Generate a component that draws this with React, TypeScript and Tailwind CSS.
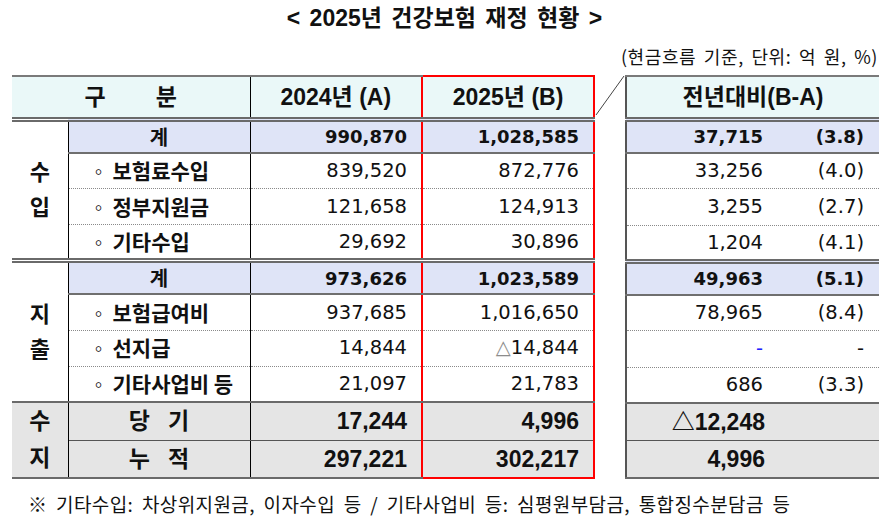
import React from 'react';

interface RowI {
  label: string;
  a: string;
  b: string;
  d: string;
  p: string;
}

const income: RowI[] = [
  { label: '보험료수입', a: '839,520', b: '872,776', d: '33,256', p: '(4.0)' },
  { label: '정부지원금', a: '121,658', b: '124,913', d: '3,255', p: '(2.7)' },
  { label: '기타수입', a: '29,692', b: '30,896', d: '1,204', p: '(4.1)' },
];

const expense: RowI[] = [
  { label: '보험급여비', a: '937,685', b: '1,016,650', d: '78,965', p: '(8.4)' },
  { label: '선지급', a: '14,844', b: '△14,844', d: '-', p: '-' },
  { label: '기타사업비 등', a: '21,097', b: '21,783', d: '686', p: '(3.3)' },
];

const head = "font-['Liberation_Sans','Noto_Sans_CJK_KR',sans-serif] font-bold";
const num = "font-['DejaVu_Sans','Noto_Sans_CJK_KR',sans-serif]";
const kr = "font-['Noto_Sans_CJK_KR',sans-serif]";

const red = 'border-l-2 border-r-2 border-l-[#ff0000] border-r-[#ff0000]';
const dotted = 'border-b border-b-[#8a8a8a] [border-bottom-style:dotted]';
const dbl = 'border-b-[5px] border-b-[#6a6a6a] [border-bottom-style:double]';
const solid = 'border-b-2 border-b-[#6a6a6a]';

function Section({
  title,
  total,
  rows,
  last,
}: {
  title: [string, string];
  total: { a: string; b: string };
  rows: RowI[];
  last: string;
}) {
  return (
    <>
      <tr className="h-[33px]">
        <td
          rowSpan={4}
          className={`border-r border-r-black bg-white text-center text-[22px] leading-[35px] ${head} ${last}`}
        >
          {title[0]}
          <br />
          {title[1]}
        </td>
        <td className={`border-r border-r-black border-b-2 border-b-[#6f6f6f] bg-[#dfe4f7] text-center text-[20px] ${kr} font-bold`}>
          계
        </td>
        <td className={`border-b-2 border-b-[#6f6f6f] bg-[#dfe4f7] pr-[14px] text-right text-[18px] font-bold ${num}`}>
          {total.a}
        </td>
        <td className={`${red} border-b-2 border-b-[#6f6f6f] bg-[#dfe4f7] pr-[14px] text-right text-[18px] font-bold ${num}`}>
          {total.b}
        </td>
      </tr>
      {rows.map((r, i) => {
        const line = i === rows.length - 1 ? last : dotted;
        return (
          <tr key={r.label} className="h-[36px]">
            <td className={`border-r border-r-black pl-[21px] text-[21px] font-bold ${kr} ${line}`}>
              <span className="mr-[5px] text-[18px]">◦</span>
              {r.label}
            </td>
            <td className={`pr-[14px] text-right text-[19.5px] ${num} ${line}`}>{r.a}</td>
            <td className={`${red} pr-[14px] text-right text-[19.5px] ${num} ${line}`}>
              {r.b.startsWith('△') ? (
                <>
                  <span className="text-[#8c8c8c]">△</span>
                  {r.b.slice(1)}
                </>
              ) : (
                r.b
              )}
            </td>
          </tr>
        );
      })}
    </>
  );
}

function RightSection({
  total,
  rows,
  last,
}: {
  total: { d: string; p: string };
  rows: RowI[];
  last: string;
}) {
  return (
    <>
      <tr className="h-[33px]">
        <td className={`border-b-2 border-b-[#6f6f6f] bg-[#dfe4f7] text-[18px] font-bold ${num}`}>
          <div className="flex justify-end pr-[15px]">
            <span>{total.d}</span>
            <span className="w-[101px] text-right">{total.p}</span>
          </div>
        </td>
      </tr>
      {rows.map((r, i) => {
        const line = i === rows.length - 1 ? last : dotted;
        return (
          <tr key={r.label} className="h-[36px]">
            <td className={`text-[19.5px] ${num} ${line}`}>
              <div className="flex justify-end pr-[15px]">
                {r.d === '-' ? (
                  <span className="text-[#2020ff]">-</span>
                ) : (
                  <span>{r.d}</span>
                )}
                <span className="w-[101px] text-right">{r.p}</span>
              </div>
            </td>
          </tr>
        );
      })}
    </>
  );
}

export default function App(): JSX.Element {
  return (
    <div className="relative h-[529px] w-[889px] overflow-hidden bg-white text-[#111]">
      <h1 className={`pt-[3px] text-center text-[23px] leading-[30px] [word-spacing:3px] ${head}`}>
        &lt; 2025년 건강보험 재정 현황 &gt;
      </h1>
      <p className={`mt-[12px] pr-[11px] text-right text-[18px] leading-[22px] tracking-[0.6px] [word-spacing:3px] ${kr}`}>
        (현금흐름 기준, 단위: 억 원, %)
      </p>

      <div className="mt-[8px] flex pl-[12px]">
        <table className="w-[582px] table-fixed border-collapse">
          <colgroup>
            <col className="w-[56px]" />
            <col className="w-[182px]" />
            <col className="w-[172px]" />
            <col className="w-[172px]" />
          </colgroup>
          <tbody>
            <tr className={`h-[43px] bg-[#eaf8f8] text-[23px] ${head}`}>
              <td colSpan={2} className={`border-t-2 border-t-[#7a7a7a] border-r border-r-black text-center ${dbl}`}>
                구<span className="inline-block w-[50px]" />분
              </td>
              <td className={`border-t-2 border-t-[#7a7a7a] text-center ${dbl}`}>2024년 (A)</td>
              <td className={`${red} border-t-2 border-t-[#ff0000] text-center ${dbl}`}>2025년 (B)</td>
            </tr>
            <Section title={['수', '입']} total={{ a: '990,870', b: '1,028,585' }} rows={income} last={dbl} />
            <Section title={['지', '출']} total={{ a: '973,626', b: '1,023,589' }} rows={expense} last={solid} />
            <tr className={`h-[37px] bg-[#e5e5e5] text-[23px] ${head}`}>
              <td
                rowSpan={2}
                className={`border-r border-r-black text-center leading-[37px] ${solid}`}
              >
                수
                <br />
                지
              </td>
              <td className="border-r border-r-black border-b border-b-[#555] text-center">
                당<span className="inline-block w-[18px]" />기
              </td>
              <td className="border-b border-b-[#555] pr-[14px] text-right">17,244</td>
              <td className={`${red} border-b border-b-[#555] pr-[14px] text-right`}>4,996</td>
            </tr>
            <tr className={`h-[37px] bg-[#e5e5e5] text-[23px] ${head}`}>
              <td className={`border-r border-r-black text-center ${solid}`}>
                누<span className="inline-block w-[18px]" />적
              </td>
              <td className={`pr-[14px] text-right ${solid}`}>297,221</td>
              <td className={`${red} border-b-2 border-b-[#ff0000] pr-[14px] text-right`}>302,217</td>
            </tr>
          </tbody>
        </table>

        <div className="w-[30px] shrink-0">
          <svg width="30" height="44" viewBox="0 0 30 44">
            <line x1="1" y1="40" x2="29" y2="1" stroke="#444" strokeWidth="1" />
          </svg>
        </div>

        <table className="w-[254px] table-fixed border-collapse border-l-2 border-l-[#555]">
          <tbody>
            <tr className={`h-[43px] bg-[#eaf8f8] text-[23px] ${head}`}>
              <td className={`border-t-2 border-t-[#7a7a7a] text-center ${dbl}`}>전년대비(B-A)</td>
            </tr>
            <RightSection total={{ d: '37,715', p: '(3.8)' }} rows={income} last={dbl} />
            <RightSection total={{ d: '49,963', p: '(5.1)' }} rows={expense} last={solid} />
            <tr className={`h-[37px] bg-[#e5e5e5] text-[23px] ${head}`}>
              <td className="border-b border-b-[#555] pr-[114px] text-right">△12,248</td>
            </tr>
            <tr className={`h-[37px] bg-[#e5e5e5] text-[23px] ${head}`}>
              <td className={`pr-[114px] text-right ${solid}`}>4,996</td>
            </tr>
          </tbody>
        </table>
      </div>

      <p className={`mt-[12px] pl-[28px] text-[19px] leading-[26px] tracking-[0.4px] [word-spacing:4px] ${kr}`}>
        ※ 기타수입: 차상위지원금, 이자수입 등 / 기타사업비 등: 심평원부담금, 통합징수분담금 등
      </p>
    </div>
  );
}
